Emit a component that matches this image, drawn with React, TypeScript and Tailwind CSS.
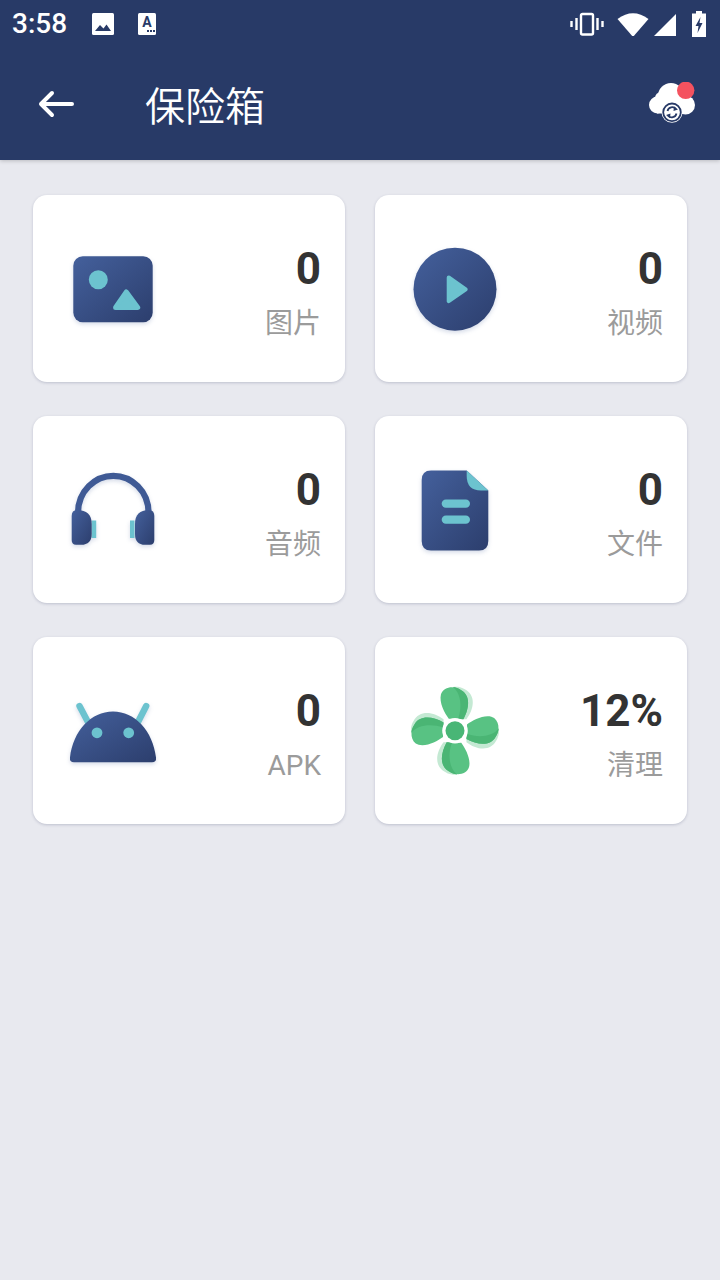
import React from "react";

const Grad = ({ id }: { id: string }) => (
  <defs>
    <linearGradient id={id} x1="0" y1="0" x2="1" y2="1">
      <stop offset="0" stopColor="#44609c" />
      <stop offset="1" stopColor="#2c3e6d" />
    </linearGradient>
  </defs>
);

const IconBox = ({ children }: { children: React.ReactNode }) => (
  <svg viewBox="0 0 100 100" className="h-[100px] w-[100px] shrink-0 drop-shadow-[0_2px_2px_rgba(66,90,150,0.22)]">
    {children}
  </svg>
);

const TEAL = "#6cc3cf";

const ImageIcon = () => (
  <IconBox>
    <Grad id="g1" />
    <rect x="10.3" y="17.2" width="79.4" height="66" rx="9.5" fill="url(#g1)" />
    <circle cx="35.3" cy="40.8" r="9.5" fill={TEAL} />
    <path d="M63.3 53 L74.7 68.5 H52.6 Z" fill={TEAL} stroke={TEAL} strokeWidth="5" strokeLinejoin="round" />
  </IconBox>
);

const VideoIcon = () => (
  <IconBox>
    <Grad id="g2" />
    <circle cx="50" cy="50.2" r="41.5" fill="url(#g2)" />
    <path d="M43.7 38.5 L60.7 50.3 L43.7 62.2 Z" fill={TEAL} stroke={TEAL} strokeWidth="4" strokeLinejoin="round" />
  </IconBox>
);

const HeadphoneIcon = () => (
  <IconBox>
    <Grad id="g3" />
    <rect x="28.7" y="60.5" width="4.5" height="17.5" fill={TEAL} />
    <rect x="67" y="60.5" width="4.5" height="17.5" fill={TEAL} />
    <path d="M15 53 C15 31 32 15.8 50.3 15.8 S85.6 31 85.6 53" fill="none" stroke="#3f5a95" strokeWidth="6.2" />
    <path d="M8.7 56 Q8.7 50 14 50 Q28.7 50 28.7 64 V74 Q28.7 84.8 18 84.8 H13 Q8.7 84.8 8.7 80 Z" fill="url(#g3)" />
    <path d="M91.3 56 Q91.3 50 86 50 Q72 50 72 64 V74 Q72 84.8 82 84.8 H87 Q91.3 84.8 91.3 80 Z" fill="url(#g3)" />
  </IconBox>
);

const DocIcon = () => (
  <IconBox>
    <Grad id="g4" />
    <path d="M26 10.5 H61.7 L83.3 30.5 V81 Q83.3 90.5 74 90.5 H26 Q16.7 90.5 16.7 81 V20 Q16.7 10.5 26 10.5 Z" fill="url(#g4)" />
    <path d="M61.7 10.5 L83.3 30.5 H76 Q61.7 30.5 61.7 16 Z" fill={TEAL} />
    <rect x="36.7" y="39.5" width="28.3" height="8.3" rx="4.15" fill={TEAL} />
    <rect x="36.7" y="55.5" width="28.3" height="8.3" rx="4.15" fill={TEAL} />
  </IconBox>
);

const AndroidIcon = () => (
  <IconBox>
    <Grad id="g5" />
    <path d="M16.5 25 L26 43 M83.2 25 L74 43" stroke={TEAL} strokeWidth="6.4" strokeLinecap="round" />
    <path d="M11 81.2 H89 Q93.6 81.2 93 76.5 C90 50 72 30.5 50 30.5 C28 30.5 10 50 7 76.5 Q6.4 81.2 11 81.2 Z" fill="url(#g5)" />
    <circle cx="34" cy="51.8" r="5.4" fill={TEAL} />
    <circle cx="65.7" cy="51.8" r="5.4" fill={TEAL} />
  </IconBox>
);

const Blade = ({ rot }: { rot: number }) => (
  <g transform={`translate(50 49.7) rotate(${rot}) scale(1.04)`}>
    <path d="M11 -11 C18 -20 21 -34 9 -40 C5 -42.5 1 -42.5 -2 -42 L8 -11 Z" fill="#c4e9d3" />
    <path d="M8 -11 C14 -22 15 -34 6 -39 C0 -43.5 -11 -43 -13.5 -35 C-15.5 -27 -10 -17 -6 -11.5 Z" fill="#58c283" />
    <path d="M8 -11 C14 -22 15 -34 6 -39 C3 -41 1 -41.7 -2 -42 C6 -36 7 -22 3 -11.5 Z" fill="#4ab574" />
  </g>
);

const FanIcon = () => (
  <svg viewBox="0 0 100 100" className="h-[100px] w-[100px] shrink-0">
    <Blade rot={0} />
    <Blade rot={90} />
    <Blade rot={180} />
    <Blade rot={270} />
    <circle cx="50" cy="49.7" r="12.8" fill="#ffffff" />
    <circle cx="50" cy="49.7" r="9.5" fill="#49b676" />
  </svg>
);

const Card = ({ icon, value, label }: { icon: React.ReactNode; value: string; label: string }) => (
  <div className="flex h-[187px] w-[312px] items-center justify-between rounded-[14px] bg-white pl-[30px] pr-6 shadow-[0_1px_3px_rgba(40,50,90,0.22)]">
    {icon}
    <div className="flex flex-col items-end pt-[15px]">
      <div className="text-[44px] font-bold leading-[52px] text-[#333333]">{value}</div>
      <div className="mt-[3px] text-[28px] leading-[52px] text-[#9b9b9b]">{label}</div>
    </div>
  </div>
);

export default function App() {
  return (
    <div className="min-h-[1280px] w-[720px] bg-[#e8e9ef] font-['Roboto','Noto_Sans_CJK_SC',sans-serif]">
      <header className="h-[160px] bg-[#283a67] text-white shadow-[0_1px_4px_rgba(0,0,0,0.2)]">
        <div className="flex h-12 items-center pl-3 pr-[14px]">
          <span className="w-[54px] whitespace-nowrap text-[28px] font-medium leading-none">3:58</span>
          <svg viewBox="0 0 24 24" className="ml-[25px] h-[24px] w-[24px]">
            <path d="M2.5 1 H21.5 Q23 1 23 2.5 V21.5 Q23 23 21.5 23 H2.5 Q1 23 1 21.5 V2.5 Q1 1 2.5 1 Z" fill="#fff" />
            <path d="M4 19 L9 13 L12.5 16.5 L15.5 12.5 L20 19 Z" fill="#283a67" />
          </svg>
          <svg viewBox="0 0 20 24" className="ml-[22px] h-[24px] w-[20px]">
            <rect x="1" y="1" width="18" height="22" rx="1.5" fill="#fff" />
            <text x="10" y="15" textAnchor="middle" fontSize="14" fontWeight="700" fill="#283a67" fontFamily="Roboto">A</text>
            <path d="M10 18 h2 v2 h-2z M13 18 h2 v2 h-2z M16 18 h2 v2 h-2z" fill="#283a67" />
          </svg>
          <div className="ml-auto flex items-center">
            <svg viewBox="0 0 34 24" className="h-[24px] w-[34px]" fill="none" stroke="#fff">
              <rect x="11" y="2" width="12" height="20.5" rx="1.5" strokeWidth="2.4" />
              <path d="M6.5 6 V18 M27.5 6 V18" strokeWidth="2.4" />
              <path d="M1.5 9 V15 M32.5 9 V15" strokeWidth="2.4" />
            </svg>
            <svg viewBox="0 0 32 24" className="ml-[13px] h-[24px] w-[32px]">
              <path d="M0.5 7 Q16 -4.5 31.5 7 L16.8 24 Q16 24.8 15.2 24 Z" fill="#fff" />
            </svg>
            <svg viewBox="0 0 22 24" className="ml-[5px] h-[24px] w-[22px]">
              <path d="M0 24 L22 2 V24 Z" fill="#fff" />
            </svg>
            <svg viewBox="0 0 14 26" className="ml-[16px] h-[26px] w-[14px]">
              <path d="M4 0 H10 V2.5 H14 V26 H0 V2.5 H4 Z" fill="#fff" />
              <path d="M8.5 6 L3.5 15 H6.5 L5.5 22 L10.5 12 H7.5 Z" fill="#283a67" />
            </svg>
          </div>
        </div>
        <div className="flex h-[112px] items-center pl-[36px] pr-[22px]">
          <svg viewBox="0 0 40 30" className="h-[30px] w-[40px]" fill="none" stroke="#fff" strokeWidth="4" strokeLinecap="round" strokeLinejoin="round">
            <path d="M36 15 H5 M16 4 L5 15 L16 26" />
          </svg>
          <h1 className="ml-[69px] font-['Noto_Sans_CJK_SC',sans-serif] text-[40px] font-[350] leading-none">保险箱</h1>
          <svg viewBox="0 0 50 44" className="ml-auto h-[44px] w-[50px]">
            <g fill="#fff">
              <circle cx="9.5" cy="23" r="8.5" />
              <circle cx="13" cy="16" r="6" />
              <circle cx="23" cy="14" r="13" />
              <circle cx="37.5" cy="23" r="9.5" />
              <rect x="9" y="20" width="29" height="11.5" />
              <circle cx="24" cy="30.3" r="10.5" />
            </g>
            <circle cx="24" cy="30.3" r="8.8" fill="none" stroke="#283a67" strokeWidth="1.8" />
            <path d="M19.5 29 A4.8 4.8 0 0 1 28 27 M28.5 31.5 A4.8 4.8 0 0 1 20 33.5" fill="none" stroke="#283a67" strokeWidth="1.8" />
            <path d="M26 24.5 L30 27.5 L25.5 29 Z M22 36 L18 33 L22.5 31.5 Z" fill="#283a67" />
            <circle cx="37.7" cy="8.3" r="8.7" fill="#f4525f" />
          </svg>
        </div>
      </header>
      <main className="grid w-fit grid-cols-[312px_312px] gap-x-[30px] gap-y-[34px] pl-[33px] pt-[35px]">
        <Card icon={<ImageIcon />} value="0" label="图片" />
        <Card icon={<VideoIcon />} value="0" label="视频" />
        <Card icon={<HeadphoneIcon />} value="0" label="音频" />
        <Card icon={<DocIcon />} value="0" label="文件" />
        <Card icon={<AndroidIcon />} value="0" label="APK" />
        <Card icon={<FanIcon />} value="12%" label="清理" />
      </main>
    </div>
  );
}
